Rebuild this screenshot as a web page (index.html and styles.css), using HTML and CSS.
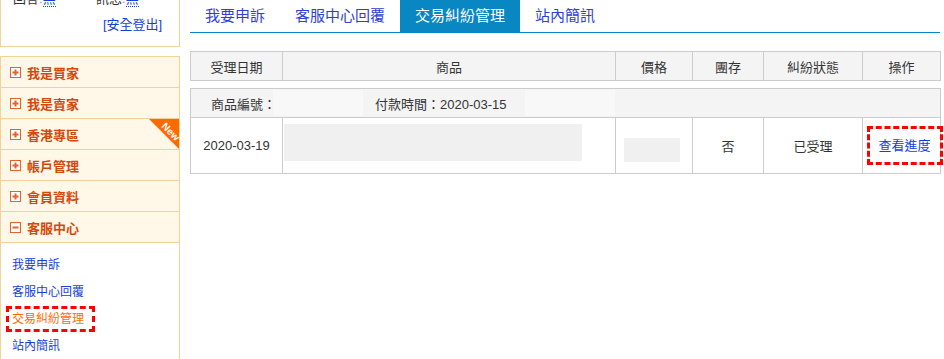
FILE: index.html
```html
<!DOCTYPE html>
<html lang="zh-Hant">
<head>
  <meta charset="UTF-8" />
  <meta name="viewport" content="width=device-width, initial-scale=1.0"/>
  <title>交易糾紛管理</title>
  <link rel="stylesheet" href="styles.css">
</head>
<body>
  <div class="page">
    <aside class="side">
      <div class="user-box">
        <div class="user-stats">
          <span class="stat">回答<i class="dot">:</i><a href="#">無</a></span>
          <span class="stat">訊息<i class="dot">:</i><a href="#">無</a></span>
        </div>
        <div class="logout"><a href="#">[安全登出]</a></div>
      </div>

      <ul class="menu">
        <li class="menu-item">
          <svg class="ico" width="11" height="11" viewBox="0 0 11 11"><rect x="0.5" y="0.5" width="10" height="10" fill="#fff" stroke="#e8602a"/><path d="M2.5 5.5h6M5.5 2.5v6" stroke="#e8602a" stroke-width="2"/></svg>
          我是買家
        </li>
        <li class="menu-item">
          <svg class="ico" width="11" height="11" viewBox="0 0 11 11"><rect x="0.5" y="0.5" width="10" height="10" fill="#fff" stroke="#e8602a"/><path d="M2.5 5.5h6M5.5 2.5v6" stroke="#e8602a" stroke-width="2"/></svg>
          我是賣家
        </li>
        <li class="menu-item has-badge">
          <svg class="ico" width="11" height="11" viewBox="0 0 11 11"><rect x="0.5" y="0.5" width="10" height="10" fill="#fff" stroke="#e8602a"/><path d="M2.5 5.5h6M5.5 2.5v6" stroke="#e8602a" stroke-width="2"/></svg>
          香港專區
          <span class="badge"><span>New</span></span>
        </li>
        <li class="menu-item">
          <svg class="ico" width="11" height="11" viewBox="0 0 11 11"><rect x="0.5" y="0.5" width="10" height="10" fill="#fff" stroke="#e8602a"/><path d="M2.5 5.5h6M5.5 2.5v6" stroke="#e8602a" stroke-width="2"/></svg>
          帳戶管理
        </li>
        <li class="menu-item">
          <svg class="ico" width="11" height="11" viewBox="0 0 11 11"><rect x="0.5" y="0.5" width="10" height="10" fill="#fff" stroke="#e8602a"/><path d="M2.5 5.5h6M5.5 2.5v6" stroke="#e8602a" stroke-width="2"/></svg>
          會員資料
        </li>
        <li class="menu-item">
          <svg class="ico" width="11" height="11" viewBox="0 0 11 11"><rect x="0.5" y="0.5" width="10" height="10" fill="#fff" stroke="#e8602a"/><path d="M2.5 5.5h6" stroke="#e8602a" stroke-width="2"/></svg>
          客服中心
        </li>
      </ul>

      <ul class="sub-menu">
        <li><a href="#">我要申訴</a></li>
        <li><a href="#">客服中心回覆</a></li>
        <li><a href="#" class="current">交易糾紛管理</a></li>
        <li><a href="#">站內簡訊</a></li>
      </ul>
    </aside>

    <main class="main">
      <nav class="tabs">
        <a href="#" class="tab">我要申訴</a>
        <a href="#" class="tab">客服中心回覆</a>
        <a href="#" class="tab active">交易糾紛管理</a>
        <a href="#" class="tab">站內簡訊</a>
      </nav>

      <table class="grid grid-head">
        <colgroup>
          <col style="width: 92px"><col style="width: 333px"><col style="width: 77px">
          <col style="width: 71px"><col style="width: 99px"><col style="width: 78px">
        </colgroup>
        <thead>
          <tr>
            <th>受理日期</th>
            <th>商品</th>
            <th>價格</th>
            <th>團存</th>
            <th>糾紛狀態</th>
            <th>操作</th>
          </tr>
        </thead>
      </table>

      <table class="grid grid-body">
        <colgroup>
          <col style="width: 92px"><col style="width: 333px"><col style="width: 77px">
          <col style="width: 71px"><col style="width: 99px"><col style="width: 78px">
        </colgroup>
        <tbody>
          <tr class="order-info">
            <td colspan="6">
              <div class="order-line">
                <span>商品編號：</span>
                <span class="blank blank-id"></span>
                <span>付款時間：2020-03-15</span>
                <span class="blank blank-pay"></span>
              </div>
            </td>
          </tr>
          <tr class="order-row">
            <td>2020-03-19</td>
            <td class="left"><span class="blank blank-goods"></span></td>
            <td class="left"><span class="blank blank-price"></span></td>
            <td>否</td>
            <td>已受理</td>
            <td class="action"><a href="#" class="progress">查看進度</a></td>
          </tr>
        </tbody>
      </table>
    </main>
  </div>
</body>
</html>
```

FILE: styles.css
```css
body {
  margin: 0;
  background-color: #fff;
  font-family: "Liberation Sans", "Noto Sans CJK TC", sans-serif;
  font-size: 13px;
  color: #333;
}
a {
  text-decoration: none;
}
ul {
  list-style: none;
  margin: 0;
  padding: 0;
}
.page {
  display: flex;
  align-items: flex-start;
}

/* left column */
.side {
  width: 180px;
  flex-shrink: 0;
}
.user-box {
  margin-top: -17px;
  padding: 5px 0 11px;
  border: 1px solid #efd496;
  background-color: #fff;
}
.user-stats {
  display: flex;
  line-height: 20px;
  padding-left: 12px;
}
.stat {
  width: 84px;
  color: #333;
}
.stat .dot {
  font-style: normal;
  color: #999;
}
.stat a {
  color: #1440d8;
  border-bottom: 1px dotted #1440d8;
}
.logout {
  margin-top: 6px;
  padding-left: 102px;
  line-height: 20px;
}
.logout a {
  color: #1440d8;
}

.menu {
  margin-top: 9px;
  border: 1px solid #efd496;
  border-bottom: none;
}
.menu-item {
  position: relative;
  display: flex;
  align-items: center;
  height: 30px;
  padding-left: 9px;
  border-bottom: 1px solid #efd496;
  background-color: #fff7e7;
  color: #d4490a;
  font-size: 13px;
  font-weight: bold;
  overflow: hidden;
}
.ico {
  margin-right: 6px;
  flex-shrink: 0;
}
.badge {
  position: absolute;
  top: 0;
  right: 0;
  width: 30px;
  height: 30px;
  background-color: #ff6a00;
  clip-path: polygon(0 0, 100% 0, 100% 100%);
}
.badge span {
  position: absolute;
  top: 8px;
  right: -2px;
  transform: rotate(45deg);
  color: #fff;
  font-family: "Liberation Sans", sans-serif;
  font-size: 10px;
  font-weight: bold;
  line-height: 10px;
}

.sub-menu {
  padding: 8px 0 0 11px;
  border-left: 1px solid #efd496;
  border-right: 1px solid #efd496;
  height: 120px;
}
.sub-menu li {
  display: flex;
  align-items: center;
  height: 27px;
}
.sub-menu a {
  color: #1440d8;
  font-size: 12px;
  line-height: 20px;
}
.sub-menu a.current {
  margin-left: -6px;
  padding: 0 8px 0 3px;
  border: 3px dashed #ff0000;
  color: #ff6a00;
}

/* right column */
.main {
  width: 750px;
  margin-left: 10px;
}
.tabs {
  display: flex;
  border-bottom: 1px solid #0a85c4;
}
.tab {
  padding: 0 15px;
  line-height: 32px;
  font-size: 15px;
  color: #2e3fd4;
}
.tab.active {
  background-color: #0887c2;
  color: #fff;
}

.grid {
  width: 750px;
  table-layout: fixed;
  border-collapse: collapse;
}
.grid th,
.grid td {
  border: 1px solid #cccccc;
  padding: 0;
  text-align: center;
  font-weight: normal;
  color: #333;
}
.grid-head {
  margin-top: 18px;
}
.grid-head th {
  height: 28px;
  background-color: #f4f4f4;
}
.grid-body {
  margin-top: 7px;
}
.order-info td {
  height: 28px;
  background-color: #f4f4f4;
  text-align: left;
}
.order-line {
  display: flex;
  align-items: center;
  padding-left: 20px;
}
.blank {
  display: inline-block;
  vertical-align: middle;
  background-color: #f0f0f0;
}
.blank-id {
  width: 90px;
  height: 26px;
  margin: 0 12px 0 -3px;
  background-color: #f8f8f8;
}
.blank-pay {
  width: 90px;
  height: 26px;
  margin-left: 18px;
  background-color: #f8f8f8;
}
.order-row td {
  height: 55px;
}
.order-row td.left {
  text-align: left;
}
.order-row td.action {
  white-space: nowrap;
}
.blank-goods {
  width: 298px;
  height: 37px;
  margin: 0 0 6px 1px;
}
.blank-price {
  width: 56px;
  height: 24px;
  margin: 8px 0 0 8px;
}
.progress {
  display: inline-block;
  margin-right: -6px;
  padding: 8px 9px;
  line-height: 17px;
  border: 3px dashed #ff0000;
  color: #1440d8;
}
```
